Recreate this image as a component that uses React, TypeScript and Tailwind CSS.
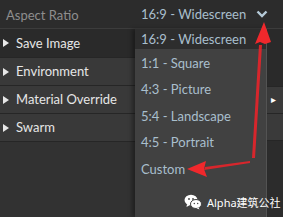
import React from "react";

const rows = ["Save Image", "Environment", "Material Override", "Swarm"];
const items = ["1:1 - Square", "4:3 - Picture", "5:4 - Landscape", "4:5 - Portrait", "Custom"];

function Tri() {
  return (
    <svg width="6" height="8" viewBox="0 0 6 8" className="shrink-0">
      <path d="M0 0 L6 4 L0 8 Z" fill="#e8e8e8" />
    </svg>
  );
}

export default function App() {
  return (
    <div
      className="relative w-[283px] h-[217px] overflow-hidden bg-[#323232]"
      style={{ fontFamily: 'Lato, "Open Sans", sans-serif' }}
    >
      {/* top row */}
      <div className="h-[29px] bg-[#2c2c2c] border-b border-[#3c3c3c] flex items-center">
        <div className="w-[135px] pl-[6px]">
          <span className="text-[13px] text-[#8e8e8e] leading-none">Aspect Ratio</span>
        </div>
        <div className="flex-1 flex items-center pl-[6px] pr-[15px]">
          <span className="text-[13px] text-[#a9bfcd] leading-none">16:9 - Widescreen</span>
          <svg width="12" height="8" viewBox="0 0 12 8" className="ml-auto">
            <path d="M1.5 1.5 L6 6 L10.5 1.5" stroke="#b5cad8" strokeWidth="2.4" fill="none" />
          </svg>
        </div>
      </div>
      {/* left panel rows */}
      <div className="flex flex-col w-[135px]">
        {rows.map((r, i) => (
          <div
            key={r}
            className={`flex items-center gap-[7px] pl-[3px] border-b border-[#262626] ${
              i === 0 ? "h-[29px] bg-[#2a2a2a]" : "h-[28px] bg-[#393939]"
            }`}
          >
            <Tri />
            <span className="text-[13px] text-[#e6e6e6] leading-none">{r}</span>
          </div>
        ))}
      </div>
      {/* right strip rows */}
      <div className="absolute left-[266px] top-[29px] w-[17px] h-[188px] flex flex-col border-l border-l-[#555]">
        <div className="h-[58px] bg-[#2a2a2a] border-b border-[#262626]"></div>
        <div className="h-[27px] bg-[#3a3a3a] border-b border-[#262626] relative">
          <span className="absolute left-[4px] top-[7px] text-[10px] text-white leading-none">▸</span>
        </div>
        <div className="h-[27px] bg-[#3a3a3a] border-b border-[#262626]"></div>
        <div className="flex-1 bg-[#2c2c2c]"></div>
      </div>
      {/* dropdown */}
      <div className="absolute left-[135px] top-[29px] w-[131px] h-[188px] flex flex-col shadow-[-3px_0_4px_rgba(0,0,0,0.35)]">
        <div className="h-[20px] bg-[#2d2d2d] flex items-center pl-[6px]">
          <span className="text-[13px] text-[#a9bfcd] leading-none">16:9 - Widescreen</span>
        </div>
        <div className="flex-1 bg-[#414141] flex flex-col pt-[1px]">
          {items.map((t) => (
            <div key={t} className="h-[26.5px] flex items-center pl-[6px]">
              <span className="text-[13px] text-[#a9bfcd] leading-none">{t}</span>
            </div>
          ))}
        </div>
      </div>
      {/* red arrows */}
      <svg className="absolute left-0 top-0" width="283" height="217" viewBox="0 0 283 217">
        <path d="M252 158 L259 45 L262 45 L255 158 Z" fill="#e8242a" opacity="0.9" />
        <path d="M264 22 L255 44 L260 42 L265 44 L271 42 Z" fill="#f0282c" />
        <path d="M250 161 L205 167 L204 170 L250 163 Z" fill="#e8242a" opacity="0.9" />
        <path d="M187 169 L206 161 L204 169 L207 177 Z" fill="#f0282c" />
      </svg>
      {/* watermark */}
      <div className="absolute left-[184px] top-[194px] flex items-center gap-[5px] whitespace-nowrap">
        <svg width="18" height="16" viewBox="0 0 18 16">
          <ellipse cx="7" cy="6" rx="6.5" ry="5.3" fill="#ffffff" />
          <path d="M3 10 L2.5 13 L6 11 Z" fill="#ffffff" />
          <ellipse cx="12" cy="10" rx="5.5" ry="4.5" fill="#ffffff" stroke="#414141" strokeWidth="1" />
          <path d="M14.5 13.5 L15.5 15.5 L12.5 14.2 Z" fill="#ffffff" />
          <circle cx="5" cy="5" r="0.9" fill="#414141" />
          <circle cx="9" cy="5" r="0.9" fill="#414141" />
          <circle cx="10.3" cy="9.5" r="0.7" fill="#414141" />
          <circle cx="13.7" cy="9.5" r="0.7" fill="#414141" />
        </svg>
        <span
          className="text-[11px] text-white leading-none"
          style={{ fontFamily: '"Noto Sans", "Noto Sans CJK SC", sans-serif' }}
        >
          Alpha建筑公社
        </span>
      </div>
    </div>
  );
}
